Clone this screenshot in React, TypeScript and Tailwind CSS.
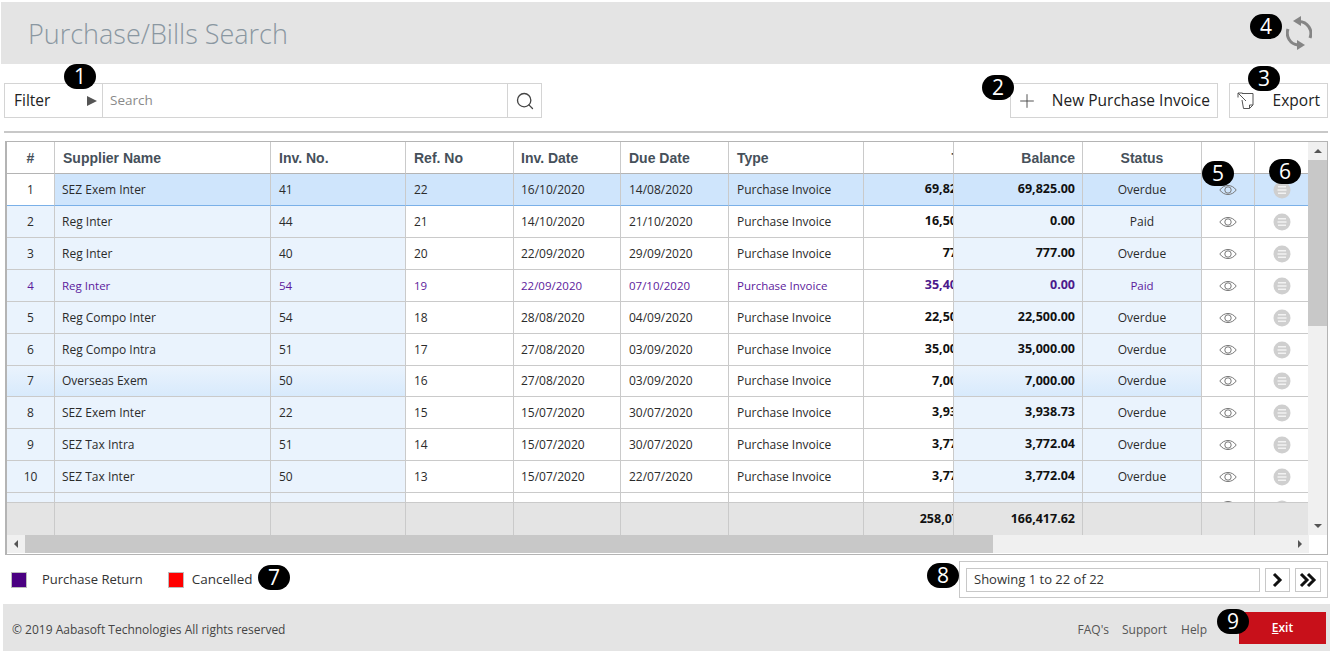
import { Plus, Search } from 'lucide-react'

interface Bill {
  no: number
  supplier: string
  inv: string
  ref: string
  invDate: string
  dueDate: string
  total: string
  balance: string
  status: string
  purple?: boolean
}

const bills: Bill[] = [
  { no: 1, supplier: 'SEZ Exem Inter', inv: '41', ref: '22', invDate: '16/10/2020', dueDate: '14/08/2020', total: '69,825.00', balance: '69,825.00', status: 'Overdue' },
  { no: 2, supplier: 'Reg Inter', inv: '44', ref: '21', invDate: '14/10/2020', dueDate: '21/10/2020', total: '16,500.00', balance: '0.00', status: 'Paid' },
  { no: 3, supplier: 'Reg Inter', inv: '40', ref: '20', invDate: '22/09/2020', dueDate: '29/09/2020', total: '777.00', balance: '777.00', status: 'Overdue' },
  { no: 4, supplier: 'Reg Inter', inv: '54', ref: '19', invDate: '22/09/2020', dueDate: '07/10/2020', total: '35,400.00', balance: '0.00', status: 'Paid', purple: true },
  { no: 5, supplier: 'Reg Compo Inter', inv: '54', ref: '18', invDate: '28/08/2020', dueDate: '04/09/2020', total: '22,500.00', balance: '22,500.00', status: 'Overdue' },
  { no: 6, supplier: 'Reg Compo Intra', inv: '51', ref: '17', invDate: '27/08/2020', dueDate: '03/09/2020', total: '35,000.00', balance: '35,000.00', status: 'Overdue' },
  { no: 7, supplier: 'Overseas Exem', inv: '50', ref: '16', invDate: '27/08/2020', dueDate: '03/09/2020', total: '7,000.00', balance: '7,000.00', status: 'Overdue' },
  { no: 8, supplier: 'SEZ Exem Inter', inv: '22', ref: '15', invDate: '15/07/2020', dueDate: '30/07/2020', total: '3,938.73', balance: '3,938.73', status: 'Overdue' },
  { no: 9, supplier: 'SEZ Tax Intra', inv: '51', ref: '14', invDate: '15/07/2020', dueDate: '30/07/2020', total: '3,772.04', balance: '3,772.04', status: 'Overdue' },
  { no: 10, supplier: 'SEZ Tax Inter', inv: '50', ref: '13', invDate: '15/07/2020', dueDate: '22/07/2020', total: '3,772.04', balance: '3,772.04', status: 'Overdue' },
]

const gridCols = 'grid grid-cols-[48px_216px_135px_108px_107px_108px_135px_90px_129px_119px_53px_54px]'
const cell = 'flex items-center overflow-hidden whitespace-nowrap border-r border-b border-[#cacaca]'
const headCell = `${cell} border-b-[#b4b4b4] pt-[2px]`
const head = "font-['Liberation_Sans',Arial,sans-serif] font-bold text-[14px] text-[#46505a]"

function Badge({ n, className }: { n: number; className: string }) {
  return (
    <div className={`absolute z-10 flex h-[25px] w-[32px] items-center justify-center rounded-full bg-black text-[21px] leading-none text-white ${className}`}>
      {n}
    </div>
  )
}

function EyeIcon() {
  return (
    <svg width="18" height="12" viewBox="0 0 18 12" fill="none" stroke="#777" strokeWidth="1" className="shrink-0">
      <path d="M0.8 6C5 0 13 0 17.2 6C13 12 5 12 0.8 6Z" />
      <circle cx="9" cy="6" r="3.2" />
    </svg>
  )
}

function MenuDot() {
  return (
    <svg width="18" height="18" viewBox="0 0 18 18" className="shrink-0">
      <circle cx="9" cy="9" r="8.5" fill="#cfcfcf" />
      <path d="M5 5.8h8M4.5 9h9M5 12.2h8" stroke="#f2f2f2" strokeWidth="1.6" />
    </svg>
  )
}

function Row({ bill }: { bill: Bill }) {
  const selected = bill.no === 1
  const text = bill.purple ? 'text-[#5c1a9c] text-[11.5px]' : 'text-[#2b2b2b] text-[12px]'
  const sideBg = selected
    ? 'bg-[#cfe5fc]'
    : bill.no === 7
      ? 'bg-gradient-to-b from-[#eaf3fd] to-[#d8eafc]'
      : 'bg-[#eaf3fd]'
  const plainBg = selected ? 'bg-[#cfe5fc]' : 'bg-white'
  const line = selected ? 'border-b-[#7ab0e8]' : ''
  const height = bill.no === 7 ? 'h-[31px]' : 'h-[32px]'
  const numBg = selected ? 'bg-white' : sideBg
  const bold = bill.purple ? 'text-[#4b1a8c]' : 'text-[#111]'

  return (
    <div className={`${gridCols} ${height} ${text}`}>
      <div className={`${cell} ${numBg} ${line} justify-center`}>{bill.no}</div>
      <div className={`${cell} ${sideBg} ${line} pl-[7px]`}>{bill.supplier}</div>
      <div className={`${cell} ${sideBg} ${line} pl-2`}>{bill.inv}</div>
      <div className={`${cell} ${plainBg} ${line} pl-2`}>{bill.ref}</div>
      <div className={`${cell} ${plainBg} ${line} pl-[7px]`}>{bill.invDate}</div>
      <div className={`${cell} ${plainBg} ${line} pl-2`}>{bill.dueDate}</div>
      <div className={`${cell} ${plainBg} ${line} pl-2`}>Purchase Invoice</div>
      <div className={`${cell} ${plainBg} ${line} justify-end font-bold text-[12.5px] ${bold}`}>
        <span className="-mr-[29px]">{bill.total}</span>
      </div>
      <div className={`${cell} ${sideBg} ${line} justify-end pr-[7px] font-bold text-[12.5px] ${bold}`}>
        {bill.balance}
      </div>
      <div className={`${cell} ${sideBg} ${line} justify-center`}>{bill.status}</div>
      <div className={`${cell} ${plainBg} ${line} justify-center`}>
        <EyeIcon />
      </div>
      <div className={`${cell} ${plainBg} ${line} justify-center`}>
        <MenuDot />
      </div>
    </div>
  )
}

export default function App() {
  return (
    <div className="relative h-[651px] w-[1330px] overflow-hidden bg-white font-['Open_Sans','Noto_Sans',sans-serif] text-[#2b2b2b]">

      {/* HEADER */}
      <div className="ml-px mt-[2px] flex h-[62px] items-center justify-between bg-[#e4e4e4] pl-[27px] pr-[18px]">
        <h1 className="text-[27px] font-light leading-none text-[#8a97a1]">Purchase/Bills Search</h1>
        <svg width="26" height="35" viewBox="0 0 26 35" fill="none" stroke="#858585" strokeWidth="3" className="mt-[1px]">
          <path d="M13 5.5A12 12 0 0 1 24 22" />
          <path d="M7 5L15 0V10Z" fill="#858585" stroke="none" />
          <path d="M12 29A12 12 0 0 1 2 13" />
          <path d="M19 29L11 24V34Z" fill="#858585" stroke="none" />
        </svg>
      </div>

      {/* TOOLBAR */}
      <div className="ml-1 mr-[2px] mt-[19px] flex h-[35px] justify-between">
        <div className="flex w-[538px] border border-[#d4d4d4]">
          <div className="flex w-[98px] items-center justify-between border-r border-[#d4d4d4] pl-[9px] pr-[5px] text-[15.5px] text-[#222]">
            Filter
            <span className="h-0 w-0 border-y-[5px] border-l-[10px] border-y-transparent border-l-[#555]" />
          </div>
          <div className="flex flex-1 items-center pl-[7px] text-[13.5px] text-[#8a8a8a]">Search</div>
          <div className="flex w-[34px] items-center justify-center border-l border-[#d4d4d4]">
            <Search size={20} strokeWidth={1.6} className="text-[#444]" />
          </div>
        </div>
        <div className="flex gap-[11px]">
          <div className="flex w-[208px] items-center justify-between border border-[#d4d4d4] pl-[5px] pr-[7px] text-[15.5px] text-[#222]">
            <Plus size={22} strokeWidth={1} className="text-[#444]" />
            New Purchase Invoice
          </div>
          <div className="flex w-[99px] items-center justify-between border border-[#d4d4d4] pl-[7px] pr-[7px] text-[15.5px] text-[#222]">
            <svg width="17" height="18" viewBox="0 0 17 18" fill="none" stroke="#555" strokeWidth="1">
              <path d="M5 1.5h11v11.5l-3.5 3.5H6.5L5 8" />
              <path d="M12.5 16.5V13H16" />
              <path d="M1 1l8 8M1 1v4.5M1 1h4.5" />
            </svg>
            Export
          </div>
        </div>
      </div>

      <div className="ml-1 mr-[2px] mt-[13px] h-[2px] bg-[#c8c8c8]" />

      {/* TABLE */}
      <div className="ml-[5px] mr-[2px] mt-[8px] h-[414px] border border-l-2 border-[#b4b4b4]">
        <div className="flex h-[393px]">
          <div className="w-[1302px] overflow-hidden">
            <div className={`${gridCols} h-[32px] bg-white ${head}`}>
              <div className={`${headCell} justify-center`}>#</div>
              <div className={`${headCell} pl-[8px]`}>Supplier Name</div>
              <div className={`${headCell} pl-2`}>Inv. No.</div>
              <div className={`${headCell} pl-2`}>Ref. No</div>
              <div className={`${headCell} pl-[7px]`}>Inv. Date</div>
              <div className={`${headCell} pl-2`}>Due Date</div>
              <div className={`${headCell} pl-2`}>Type</div>
              <div className={`${headCell} justify-end`}><span className="-mr-[31px]">Total</span></div>
              <div className={`${headCell} justify-end pr-[7px]`}>Balance</div>
              <div className={`${headCell} justify-center`}>Status</div>
              <div className={headCell} />
              <div className={headCell} />
            </div>

            {bills.map((bill) => (
              <Row key={bill.no} bill={bill} />
            ))}

            {/* partly scrolled row */}
            <div className={`${gridCols} h-[10px]`}>
              <div className={`${cell} bg-[#eaf3fd]`} />
              <div className={`${cell} bg-[#eaf3fd]`} />
              <div className={`${cell} bg-[#eaf3fd]`} />
              <div className={`${cell} bg-white`} />
              <div className={`${cell} bg-white`} />
              <div className={`${cell} bg-white`} />
              <div className={`${cell} bg-white`} />
              <div className={`${cell} bg-white`} />
              <div className={`${cell} bg-[#eaf3fd]`} />
              <div className={`${cell} bg-[#eaf3fd]`} />
              <div className={`${cell} items-start justify-center bg-white pt-[7px]`}>
                <EyeIcon />
              </div>
              <div className={`${cell} items-start justify-center bg-white pt-[7px]`}>
                <MenuDot />
              </div>
            </div>

            {/* totals */}
            <div className={`${gridCols} h-[33px] bg-[#e4e4e4] text-[12.5px] font-bold text-[#111]`}>
              <div className={cell} />
              <div className={cell} />
              <div className={cell} />
              <div className={cell} />
              <div className={cell} />
              <div className={cell} />
              <div className={cell} />
              <div className={`${cell} justify-end`}><span className="-mr-[31px]">258,073.81</span></div>
              <div className={`${cell} justify-end pr-[7px]`}>166,417.62</div>
              <div className={cell} />
              <div className={cell} />
              <div className={cell} />
            </div>
          </div>

          {/* vertical scrollbar */}
          <div className="flex w-[19px] flex-col items-center bg-[#f0f0f0]">
            <div className="flex h-[18px] items-center">
              <span className="h-0 w-0 border-x-[4px] border-b-[4px] border-x-transparent border-b-[#555]" />
            </div>
            <div className="h-[166px] w-full bg-[#c8c8c8]" />
            <div className="flex-1" />
            <div className="flex h-[18px] items-center">
              <span className="h-0 w-0 border-x-[4px] border-t-[4px] border-x-transparent border-t-[#555]" />
            </div>
          </div>
        </div>

        {/* horizontal scrollbar */}
        <div className="flex h-[18px] w-[1302px] items-center bg-[#f0f0f0]">
          <div className="flex w-[18px] justify-center">
            <span className="h-0 w-0 border-y-[4px] border-r-[4px] border-y-transparent border-r-[#555]" />
          </div>
          <div className="h-full w-[968px] bg-[#c8c8c8]" />
          <div className="flex-1" />
          <div className="flex w-[18px] justify-center">
            <span className="h-0 w-0 border-y-[4px] border-l-[4px] border-y-transparent border-l-[#555]" />
          </div>
        </div>
      </div>

      {/* LEGEND + PAGER */}
      <div className="ml-[11px] mr-[2px] mt-[6px] flex h-[37px] items-center justify-between">
        <div className="flex items-center text-[13px] text-[#333]">
          <span className="h-[16px] w-[16px] border border-[#bdbdbd] bg-[#4b0082]" />
          <span className="ml-[15px]">Purchase Return</span>
          <span className="ml-[25px] h-[16px] w-[16px] border border-[#bdbdbd] bg-[#ff0000]" />
          <span className="ml-2 text-[13.5px]">Cancelled</span>
        </div>
        <div className="flex h-[37px] w-[369px] items-center gap-[5px] border border-[#c8c8c8] px-[6px]">
          <div className="flex h-[24px] w-[297px] items-center border border-[#c8c8c8] pl-[7px] text-[13px] text-[#333]">
            Showing 1 to 22 of 22
          </div>
          <div className="flex h-[24px] w-[26px] items-center justify-center border border-[#c8c8c8]">
            <svg width="12" height="16" viewBox="0 0 12 16" fill="none" stroke="#111" strokeWidth="3"><path d="M3 2l6 6-6 6" /></svg>
          </div>
          <div className="flex h-[24px] w-[26px] items-center justify-center border border-[#c8c8c8]">
            <svg width="18" height="16" viewBox="0 0 18 16" fill="none" stroke="#111" strokeWidth="3"><path d="M2 2l6 6-6 6M9 2l6 6-6 6" /></svg>
          </div>
        </div>
      </div>

      {/* FOOTER */}
      <div className="ml-[3px] mt-[6px] flex h-[47px] items-center justify-between bg-[#e4e4e4] pl-[9px] pr-[4px]">
        <span className="mt-[4px] text-[12px] text-[#444]">© 2019 Aabasoft Technologies All rights reserved</span>
        <div className="flex items-center">
          <div className="mt-[4px] flex gap-[14px] text-[12px] text-[#555]">
            <span>FAQ's</span>
            <span className="-ml-px">Support</span>
            <span>Help</span>
          </div>
          <div className="ml-[32px] flex h-[32px] w-[87px] items-center justify-center bg-[#c8101a] text-[12px] font-semibold text-white">
            <span><span className="underline">E</span>xit</span>
          </div>
        </div>
      </div>

      {/* NUMBERED CALLOUTS */}
      <Badge n={1} className="left-[64px] top-[64px]" />
      <Badge n={2} className="left-[982px] top-[75px]" />
      <Badge n={3} className="left-[1248px] top-[66px]" />
      <Badge n={4} className="left-[1250px] top-[14px]" />
      <Badge n={5} className="left-[1202px] top-[161px]" />
      <Badge n={6} className="left-[1269px] top-[159px]" />
      <Badge n={7} className="left-[258px] top-[565px]" />
      <Badge n={8} className="left-[927px] top-[563px]" />
      <Badge n={9} className="left-[1217px] top-[609px]" />
    </div>
  )
}
